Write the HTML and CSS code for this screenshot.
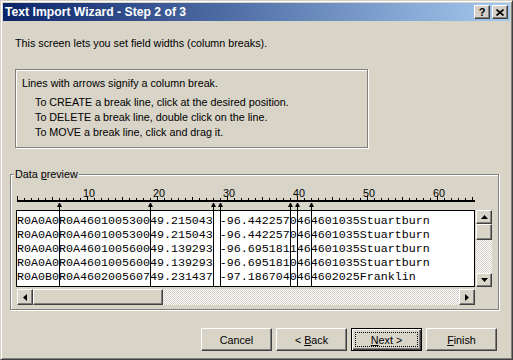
FILE: index.html
```html
<!DOCTYPE html>
<html lang="en">
<head>
    <meta charset="UTF-8">
    <title>Text Import Wizard - Step 2 of 3</title>
    <link rel="stylesheet" href="styles.css">
</head>
<body>
    <div class="window">
        <div class="titlebar">
            <span class="title">Text Import Wizard - Step 2 of 3</span>
            <div class="caption-buttons">
                <button class="cap-btn help">?</button>
                <button class="cap-btn">
                    <svg width="8" height="7" viewBox="0 0 8 7"><path d="M0.5 0.5 L7.5 6.5 M7.5 0.5 L0.5 6.5" stroke="#000" stroke-width="1.6"/></svg>
                </button>
            </div>
        </div>

        <p class="intro">This screen lets you set field widths (column breaks).</p>

        <div class="info">
            <p class="lead">Lines with arrows signify a column break.</p>
            <ul class="steps">
                <li>To CREATE a break line, click at the desired position.</li>
                <li>To DELETE a break line, double click on the line.</li>
                <li>To MOVE a break line, click and drag it.</li>
            </ul>
        </div>

        <fieldset class="preview">
            <legend>Data <u>p</u>review</legend>
            <div class="ruler-nums">
                <span>10</span><span>20</span><span>30</span><span>40</span><span>50</span><span>60</span>
            </div>
            <div class="ruler"></div>
            <div class="grid-row">
                <div class="grid">
<pre class="rows">R0A0A0R0A460100530049.215043 -96.4422570464601035Stuartburn
R0A0A0R0A460100530049.215043 -96.4422570464601035Stuartburn
R0A0A0R0A460100560049.139293 -96.6951811464601035Stuartburn
R0A0A0R0A460100560049.139293 -96.6951810464601035Stuartburn
R0A0B0R0A460200560749.231437 -97.1867040464602025Franklin</pre>
                    <!-- break columns 6, 19, 28, 29, 39, 40, 42 (7px per char) -->
                    <span class="brk" style="left:42px"></span>
                    <span class="brk" style="left:133px"></span>
                    <span class="brk" style="left:196px"></span>
                    <span class="brk" style="left:203px"></span>
                    <span class="brk" style="left:273px"></span>
                    <span class="brk" style="left:280px"></span>
                    <span class="brk" style="left:294px"></span>
                </div>
                <div class="vscroll">
                    <div class="sb-btn v-btn">
                        <svg width="7" height="4" viewBox="0 0 7 4"><polygon points="3.5,0 7,4 0,4" fill="#000"/></svg>
                    </div>
                    <div class="sb-btn v-thumb"></div>
                    <div class="track"></div>
                    <div class="sb-btn v-btn">
                        <svg width="7" height="4" viewBox="0 0 7 4"><polygon points="0,0 7,0 3.5,4" fill="#000"/></svg>
                    </div>
                </div>
            </div>
            <div class="hscroll">
                <div class="sb-btn h-btn">
                    <svg width="4" height="7" viewBox="0 0 4 7"><polygon points="0,3.5 4,0 4,7" fill="#000"/></svg>
                </div>
                <div class="sb-btn h-thumb"></div>
                <div class="track"></div>
                <div class="sb-btn h-btn">
                    <svg width="4" height="7" viewBox="0 0 4 7"><polygon points="0,0 4,3.5 0,7" fill="#000"/></svg>
                </div>
            </div>
        </fieldset>

        <div class="actions">
            <button class="btn">Cancel</button>
            <button class="btn">&lt; <u>B</u>ack</button>
            <button class="btn default"><u>N</u>ext &gt;</button>
            <button class="btn"><u>F</u>inish</button>
        </div>
    </div>
</body>
</html>
```

FILE: styles.css
```css
* {
    box-sizing: border-box;
}
body {
    margin: 0;
    font-family: "Liberation Sans", Arial, sans-serif;
    font-size: 10.75px;
    color: #000;
}
.window {
    width: 513px;
    height: 360px;
    padding: 2px;
    background: #d8d4c8;
    border: 1px solid;
    border-color: #d4d0c8 #404040 #404040 #d4d0c8;
    box-shadow: inset 1px 1px #fff, inset -1px -1px #808080;
}

/* title bar */
.titlebar {
    height: 18px;
    display: flex;
    align-items: flex-start;
    background: linear-gradient(90deg, #0a246a, #a6caf0);
    color: #fff;
}
.title {
    flex: 1;
    padding-left: 2px;
    font-weight: bold;
    font-size: 12.2px;
    line-height: 18px;
}
.caption-buttons {
    display: flex;
    gap: 2px;
    margin: 2px 2px 0 0;
}
.cap-btn {
    width: 16px;
    height: 14px;
    padding: 0;
    display: flex;
    align-items: center;
    justify-content: center;
    background: #d4d0c8;
    border: 1px solid;
    border-color: #fff #404040 #404040 #fff;
    box-shadow: inset -1px -1px #808080;
    font: bold 11px/1 "Liberation Sans", Arial, sans-serif;
    color: #000;
}

/* instructions */
.intro {
    margin: 15px 0 0 12px;
    line-height: 14px;
}
.info {
    width: 353px;
    height: 79px;
    margin: 19px 0 0 12px;
    padding: 6px 0 0 6px;
    border: 1px solid #808080;
    box-shadow: inset 1px 1px #fff, 1px 1px #fff;
}
.lead {
    margin: 0;
    line-height: 14px;
}
.steps {
    list-style: none;
    margin: 5px 0 0 13px;
    padding: 0;
    line-height: 15px;
}

/* data preview */
.preview {
    width: 489px;
    min-width: 0;
    margin: 19px 0 0 7px;
    padding: 6px 6px 4px 5px;
    border: 1px solid #808080;
    box-shadow: inset 1px 1px #fff, 1px 1px #fff;
}
.preview legend {
    margin-left: -2px;
    padding: 0 1px;
    line-height: 14px;
    background: #d8d4c8;
}
.ruler-nums {
    display: flex;
    height: 9px;
    margin-left: 38px;
    line-height: 12px;
}
.ruler-nums span {
    width: 70px;
    text-align: center;
}
.ruler {
    width: 458px;
    height: 6px;
    margin-left: 1px;
    border-bottom: 2px solid #000;
    background:
        linear-gradient(90deg, #000 1px, transparent 1px) 0 100% / 70px 4px repeat-x,
        linear-gradient(90deg, #000 1px, transparent 1px) 0 100% / 35px 3px repeat-x,
        linear-gradient(90deg, #000 1px, transparent 1px) 0 100% / 7px 2px repeat-x;
}
.grid-row {
    display: flex;
    gap: 1px;
    margin-top: 8px;
}
.grid {
    position: relative;
    width: 459px;
    height: 77px;
    background: #fff;
    border: 1px solid #000;
}
.rows {
    height: 100%;
    margin: 0;
    padding-top: 3px;
    overflow: hidden;
    white-space: pre;
    font: 11.667px/14px "Liberation Mono", "Courier New", monospace;
    color: #000;
}
.brk {
    position: absolute;
    top: -8px;
    bottom: 0;
    width: 1px;
    background: #000;
}
.brk::before {
    content: "";
    position: absolute;
    top: 0;
    left: -2px;
    width: 1px;
    border-left: 2px solid transparent;
    border-right: 2px solid transparent;
    border-bottom: 4px solid #000;
}

/* scrollbars */
.track {
    flex: 1;
    background: repeating-conic-gradient(#fff 0 25%, #d4d0c8 0 50%) 0 0 / 2px 2px;
}
.sb-btn {
    display: flex;
    align-items: center;
    justify-content: center;
    background: #d8d4c8;
    border: 1px solid;
    border-color: #fff #404040 #404040 #fff;
    box-shadow: inset -1px -1px #808080;
}
.vscroll {
    width: 16px;
    display: flex;
    flex-direction: column;
}
.v-btn {
    height: 14px;
}
.v-thumb {
    height: 16px;
}
.hscroll {
    display: flex;
    width: 458px;
    height: 16px;
    margin: 2px 0 0 1px;
}
.h-btn {
    width: 16px;
}
.h-thumb {
    width: 130px;
}

/* buttons */
.actions {
    display: flex;
    justify-content: flex-end;
    gap: 4px;
    margin: 18px 13px 0 0;
}
.btn {
    position: relative;
    width: 71px;
    height: 23px;
    padding: 0;
    background: #d8d4c8;
    border: 1px solid;
    border-color: #fff #404040 #404040 #fff;
    box-shadow: inset -1px -1px #808080;
    font: 10.75px "Liberation Sans", Arial, sans-serif;
    color: #000;
}
.btn.default {
    border-color: #000;
    box-shadow: inset 1px 1px #fff, inset -1px -1px #404040, inset -2px -2px #808080;
}
.btn.default::after {
    content: "";
    position: absolute;
    inset: 3px;
    border: 1px dotted #000;
}
```
